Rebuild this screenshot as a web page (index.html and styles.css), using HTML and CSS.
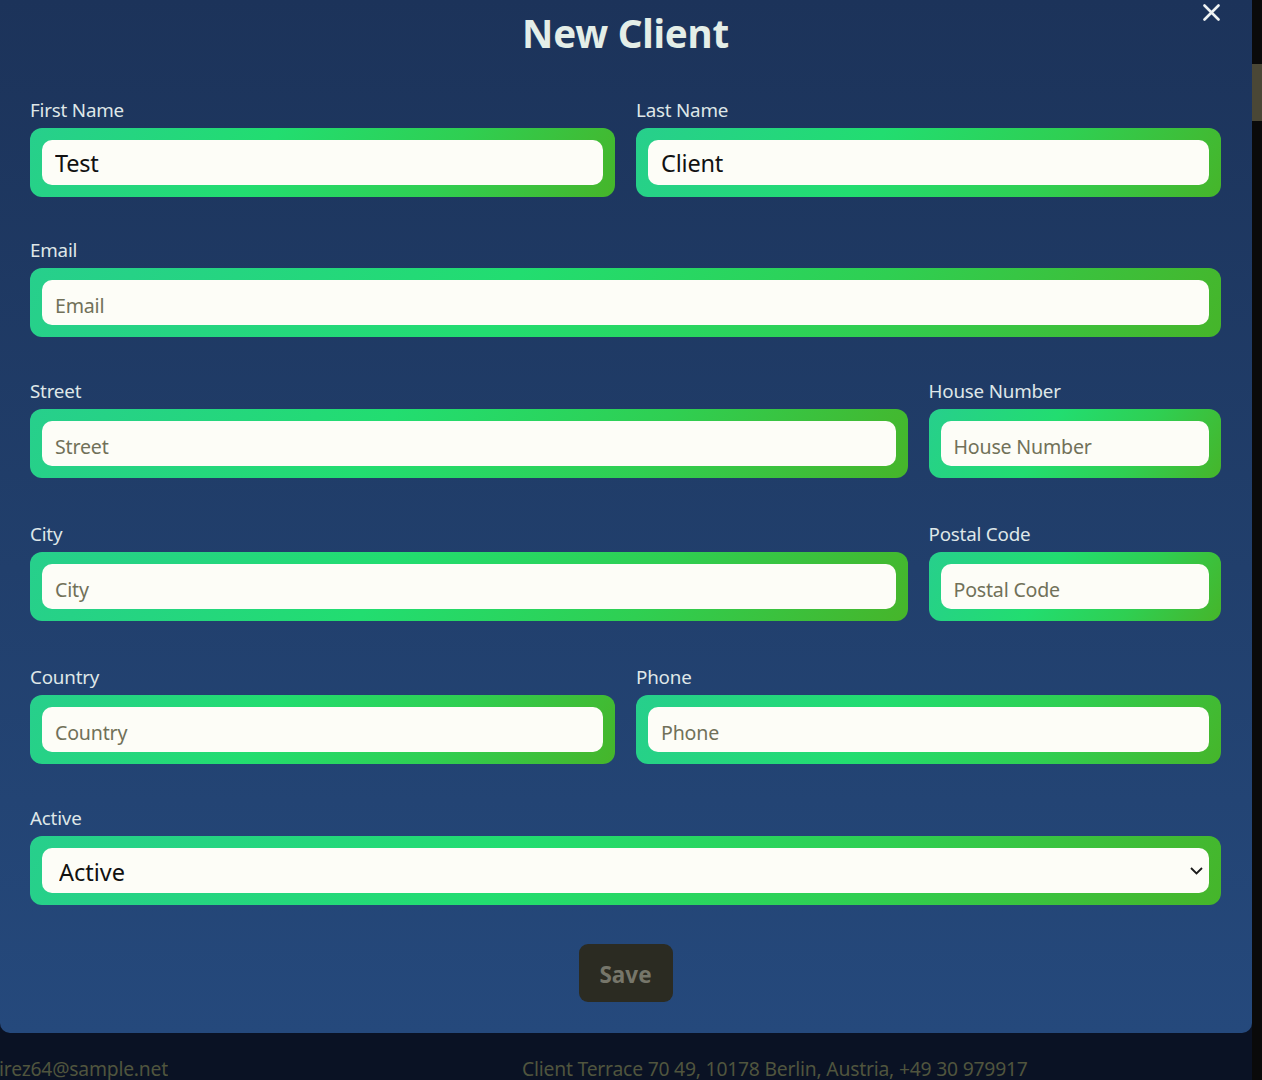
FILE: index.html
```html
<!DOCTYPE html>
<html lang="en">
<head>
<meta charset="utf-8">
<title>New Client</title>
<link rel="stylesheet" href="styles.css">
</head>
<body>
<div class="viewport">
  <div class="modal">
    <button class="close" type="button" aria-label="Close">
      <svg width="17" height="17" viewBox="0 0 17 17"><path d="M1.5 1.5 L15.5 15.5 M15.5 1.5 L1.5 15.5" stroke="#eef2f2" stroke-width="2.6" stroke-linecap="round" fill="none"/></svg>
    </button>
    <h1 class="title">New Client</h1>
    <form class="form">
      <div class="row half">
        <label class="field"><span class="label">First Name</span><span class="frame"><input class="input value" type="text" value="Test"></span></label>
        <label class="field"><span class="label">Last Name</span><span class="frame"><input class="input value" type="text" value="Client"></span></label>
      </div>
      <div class="row full gap-sm">
        <label class="field"><span class="label">Email</span><span class="frame"><input class="input" type="text" placeholder="Email"></span></label>
      </div>
      <div class="row wide">
        <label class="field"><span class="label">Street</span><span class="frame"><input class="input" type="text" placeholder="Street"></span></label>
        <label class="field"><span class="label">House Number</span><span class="frame"><input class="input" type="text" placeholder="House Number"></span></label>
      </div>
      <div class="row wide gap-lg">
        <label class="field"><span class="label">City</span><span class="frame"><input class="input" type="text" placeholder="City"></span></label>
        <label class="field"><span class="label">Postal Code</span><span class="frame"><input class="input" type="text" placeholder="Postal Code"></span></label>
      </div>
      <div class="row half gap-lg">
        <label class="field"><span class="label">Country</span><span class="frame"><input class="input" type="text" placeholder="Country"></span></label>
        <label class="field"><span class="label">Phone</span><span class="frame"><input class="input" type="text" placeholder="Phone"></span></label>
      </div>
      <div class="row full">
        <label class="field"><span class="label">Active</span><span class="frame select-frame"><select class="input select"><option>Active</option><option>Inactive</option></select><svg class="chevron" width="13" height="8" viewBox="0 0 13 8"><path d="M1 1 L6.5 6.5 L12 1" stroke="#1a1a1a" stroke-width="1.8" fill="none"/></svg></span></label>
      </div>
      <div class="actions"><button class="save" type="button">Save</button></div>
    </form>
  </div>
  <div class="behind">
    <div class="cell email-cell"><span>ramirez64@sample.net</span></div>
    <div class="cell addr-cell">Client Terrace 70 49, 10178 Berlin, Austria, +49 30 979917</div>
  </div>
</div>
<div class="scrollbar"><div class="thumb"></div></div>
</body>
</html>
```
FILE: styles.css
```css
* { box-sizing: border-box; }
html, body { margin: 0; padding: 0; }
body {
  display: flex;
  width: 1262px;
  height: 1080px;
  overflow: hidden;
  background: #0a1224;
  font-family: "Noto Sans", "Open Sans", sans-serif;
}
.viewport {
  flex: 1;
  display: flex;
  flex-direction: column;
  min-width: 0;
}
.modal {
  position: relative;
  width: 1252px;
  padding: 10px 31px 31px 30px;
  background: linear-gradient(180deg, #1c335a 0%, #213f6c 55%, #25497c 100%);
  border-radius: 0 0 10px 10px;
}
.close {
  position: absolute;
  top: 4px;
  left: 1203px;
  width: 17px;
  height: 17px;
  padding: 0;
  border: 0;
  background: none;
  display: flex;
}
.title {
  margin: 0;
  text-align: center;
  font-size: 38.5px;
  line-height: 46px;
  font-weight: 700;
  color: #e4eee8;
  letter-spacing: -0.2px;
}
.form {
  margin-top: 42px;
  display: flex;
  flex-direction: column;
}
.row { display: grid; column-gap: 21px; margin-top: 42px; }
.row:first-child { margin-top: 0; }
.row.gap-sm { margin-top: 41px; }
.row.gap-lg { margin-top: 44px; }
.row.half { grid-template-columns: 1fr 1fr; }
.row.wide { grid-template-columns: 3fr 1fr; }
.row.full { grid-template-columns: 1fr; }
.field {
  display: flex;
  flex-direction: column;
  gap: 6px;
}
.label {
  font-size: 18.8px;
  line-height: 24px;
  color: #dfe7e8;
  letter-spacing: -0.2px;
}
.frame {
  position: relative;
  display: flex;
  padding: 12px;
  border-radius: 12px;
  background: linear-gradient(120deg, #27cf8c 0%, #22dd70 40%, #2fcf52 70%, #46b52a 100%);
}
.input {
  flex: 1;
  width: 100%;
  height: 45px;
  border: 0;
  border-radius: 10px;
  background: #fdfdf7;
  padding: 6px 12px 0 13px;
  font-family: "Noto Sans", "Open Sans", sans-serif;
  font-size: 19.6px;
  color: #111;
  outline: none;
}
.input.value { font-size: 23.5px; letter-spacing: -0.2px; padding: 0 12px 0 13px; }
.input::placeholder { color: #717159; opacity: 1; letter-spacing: -0.2px; }
.select {
  appearance: none;
  -webkit-appearance: none;
  padding: 2px 12px 0 17px;
  font-size: 23.5px;
}
.chevron {
  position: absolute;
  right: 18px;
  top: 31px;
  pointer-events: none;
}
.actions {
  display: flex;
  justify-content: center;
  margin-top: 39px;
}
.save {
  width: 94px;
  height: 58px;
  border: 0;
  border-radius: 9px;
  background: #2b2b22;
  color: #76766a;
  font-family: "Noto Sans", "Open Sans", sans-serif;
  font-weight: 700;
  font-size: 22.5px;
  padding: 3px 0 0;
}
.behind {
  display: grid;
  grid-template-columns: 168px 1fr;
  margin-top: 23px;
  font-size: 19.3px;
  line-height: 25px;
  color: #50553e;
  letter-spacing: -0.2px;
}
.cell { white-space: nowrap; overflow: hidden; }
.email-cell { display: flex; justify-content: flex-end; }
.addr-cell { padding-left: 354px; }
.scrollbar {
  width: 10px;
  flex: none;
  background: #0a0a0a;
  padding-top: 64px;
}
.thumb {
  height: 57px;
  background: #4a4736;
}
```
